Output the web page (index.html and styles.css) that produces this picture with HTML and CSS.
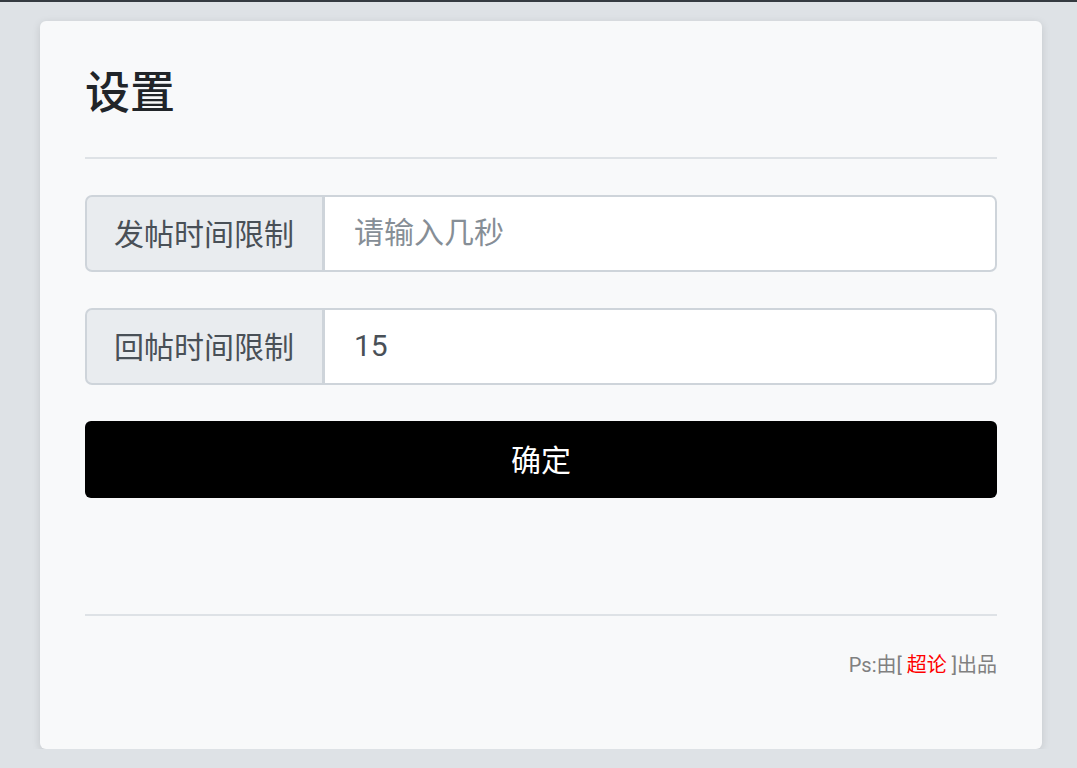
FILE: index.html
```html
<!DOCTYPE html>
<html lang="zh-CN">

<head>
    <meta charset="UTF-8">
    <meta name="viewport" content="width=device-width, initial-scale=1.0">
    <title>设置</title>
    <link rel="stylesheet" href="styles.css">
</head>

<body>
    <div class="card">
        <h1 class="title">设置</h1>
        <hr class="line">
        <div class="input-group">
            <span class="input-label">发帖时间限制</span>
            <input class="input-field" type="text" placeholder="请输入几秒">
        </div>
        <div class="input-group">
            <span class="input-label">回帖时间限制</span>
            <input class="input-field" type="text" value="15">
        </div>
        <button class="submit-btn">确定</button>
        <hr class="line footer-line">
        <p class="footer">Ps:由[ <span class="brand">超论</span> ]出品</p>
    </div>
</body>

</html>
```

FILE: styles.css
```css
body {
    font-family: Roboto, "Noto Sans CJK SC", sans-serif;
    background-color: #dee2e6;
    border-top: 2px solid #343a40;
    margin: 0;
    padding: 0;
}

.card {
    box-sizing: border-box;
    width: 1002px;
    height: 728px;
    margin: 19px 0 0 40px;
    padding: 45px;
    background-color: #f8f9fa;
    border-radius: 6px;
    box-shadow: 0 2px 8px rgba(0, 0, 0, 0.12);
}

.title {
    margin: 0;
    font-size: 45px;
    font-weight: 500;
    line-height: 53px;
    color: #212529;
    padding-top: 1px;
}

.line {
    margin: 37px 0 36px;
    border: 0;
    border-top: 2px solid #dee2e6;
}

.input-group {
    display: flex;
    height: 77px;
    margin-bottom: 36px;
}

.input-label {
    display: flex;
    align-items: center;
    padding: 0 28px 3px 27px;
    font-size: 30px;
    color: #495057;
    background-color: #e9ecef;
    border: 2px solid #ced4da;
    border-radius: 7px 0 0 7px;
}

.input-field {
    flex: 1;
    min-width: 0;
    padding: 0 28px 3px 29px;
    font-family: inherit;
    font-size: 30px;
    color: #495057;
    background-color: #fff;
    border: 2px solid #ced4da;
    border-left-width: 1px;
    border-radius: 0 7px 7px 0;
    outline: none;
}

.input-field::placeholder {
    color: #868e96;
}

.submit-btn {
    display: block;
    width: 100%;
    height: 77px;
    padding: 0 0 4px;
    font-family: inherit;
    font-size: 30px;
    color: #fff;
    background-color: #000;
    border: none;
    border-radius: 6px;
    cursor: pointer;
}

.footer-line {
    margin: 116px 0 34px;
}

.footer {
    margin: 0;
    text-align: right;
    font-size: 20px;
    line-height: 30px;
    color: #808080;
}

.brand {
    color: #f00;
}
```
